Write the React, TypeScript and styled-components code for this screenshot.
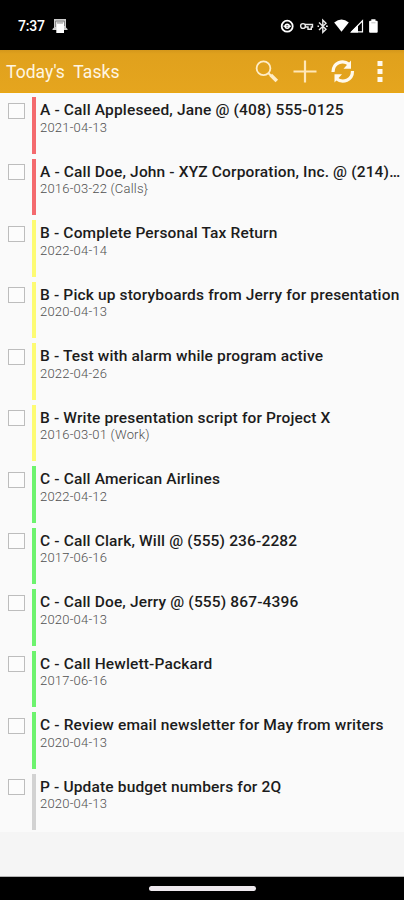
import React from "react";
import styled, { createGlobalStyle } from "styled-components";

const GlobalStyle = createGlobalStyle`
  * { box-sizing: border-box; }
  body { margin: 0; background: #f5f5f5; font-family: Roboto, "Liberation Sans", sans-serif; }
`;

const Screen = styled.div`
  width: 404px;
  height: 900px;
  display: flex;
  flex-direction: column;
  overflow: hidden;
  background: #f5f5f5;
`;

const StatusBar = styled.header`
  flex: none;
  height: 50px;
  padding: 1px 25px 0 18px;
  display: flex;
  align-items: center;
  justify-content: space-between;
  background: #000;
  color: #fff;
`;

const StatusLeft = styled.div`
  display: flex;
  align-items: center;
  gap: 7px;
`;

const Clock = styled.span`
  width: 27px;
  font-size: 14px;
  font-weight: 500;
  line-height: 16px;
  letter-spacing: -0.2px;
  white-space: nowrap;
`;

const Toolbar = styled.div`
  flex: none;
  height: 43px;
  padding: 0 6px 0 6px;
  display: flex;
  align-items: center;
  justify-content: space-between;
  background: linear-gradient(#d4971b 0, #e0a11d 4px, #e5a51e 100%);
  border-bottom: 1px solid #e9a711;
`;

const Heading = styled.h1`
  margin: 2px 0 0;
  color: #fff6e2;
  font-size: 17.5px;
  font-weight: 400;
  line-height: 20px;
  letter-spacing: 0.04px;
  white-space: pre;
`;

const ToolbarActions = styled.div`
  display: flex;
  align-items: center;
`;

const ActionButton = styled.button<{ $width: number }>`
  width: ${(p) => p.$width}px;
  height: 42px;
  padding: 1px 0 0;
  border: 0;
  background: none;
  display: flex;
  align-items: center;
  justify-content: center;
`;

const TaskList = styled.ul`
  flex: none;
  list-style: none;
  margin: 0;
  height: 739px;
  padding: 4px 0 0;
  background: #fafafa;
`;

const TaskRow = styled.li`
  height: 61.5px;
  padding: 0 0 5px 8px;
  display: flex;
`;

const CheckBox = styled.span`
  flex: none;
  width: 17px;
  height: 16px;
  margin: 5.5px 7px 0 0;
  border: 1px solid #bdbdbd;
  background: #fcfcfc;
`;

const PriorityBar = styled.span<{ $color: string }>`
  flex: none;
  width: 3.5px;
  margin-right: 4.5px;
  background: ${(p) => p.$color};
`;

const TaskText = styled.div`
  min-width: 0;
  padding-top: 4px;
`;

const Title = styled.div`
  color: #1c1c1c;
  font-size: 15.5px;
  font-weight: 500;
  line-height: 18px;
  letter-spacing: 0.15px;
  white-space: nowrap;
`;

const Due = styled.div`
  margin-top: 0.5px;
  color: #505050;
  font-size: 13px;
  font-weight: 300;
  line-height: 15px;
  letter-spacing: 0.2px;
  white-space: nowrap;
`;

const NavBar = styled.footer`
  flex: none;
  margin-top: auto;
  height: 23px;
  padding-top: 9px;
  background: #000;
  box-shadow: 0 -1px 0 #b4b4b4;
`;

const HomeHandle = styled.div`
  width: 107px;
  height: 5px;
  margin: 0 auto 0 149px;
  border-radius: 3px;
  background: #eee9ee;
`;

const RED = "#f46a6e";
const YELLOW = "#fdfb73";
const GREEN = "#6df36e";
const GRAY = "#d2d2d2";

const tasks = [
  { title: "A - Call Appleseed, Jane @ (408) 555-0125", due: "2021-04-13", color: RED },
  { title: "A - Call Doe, John - XYZ Corporation, Inc. @ (214)…", due: "2016-03-22 (Calls}", color: RED },
  { title: "B - Complete Personal Tax Return", due: "2022-04-14", color: YELLOW },
  { title: "B - Pick up storyboards from Jerry for presentation", due: "2020-04-13", color: YELLOW },
  { title: "B - Test with alarm while program active", due: "2022-04-26", color: YELLOW },
  { title: "B - Write presentation script for Project X", due: "2016-03-01 (Work)", color: YELLOW },
  { title: "C - Call American Airlines", due: "2022-04-12", color: GREEN },
  { title: "C - Call Clark, Will @ (555) 236-2282", due: "2017-06-16", color: GREEN },
  { title: "C - Call Doe, Jerry @ (555) 867-4396", due: "2020-04-13", color: GREEN },
  { title: "C - Call Hewlett-Packard", due: "2017-06-16", color: GREEN },
  { title: "C - Review email newsletter for May from writers", due: "2020-04-13", color: GREEN },
  { title: "P - Update budget numbers for 2Q", due: "2020-04-13", color: GRAY },
];

const PrinterIcon = () => (
  <svg width="16" height="16" viewBox="0 0 16 16">
    <path d="M2 1h12v8.500l1.500 1.500v1H12V15H4.500v-3H.5v-1L2 9.500z" fill="#ccc" />
    <path d="M4.500 4.500h7.500V15H4.500z" fill="#fff" />
    <path d="M3.500 9V3h9v5M5 5h6" fill="none" stroke="#777" strokeWidth=".8" />
  </svg>
);

const StatusIcons = () => (
  <svg width="99" height="16" viewBox="280 17 99 16">
    <circle cx="287.200" cy="25.200" r="5.500" fill="none" stroke="#fff" strokeWidth="1.800" />
    <circle cx="287.200" cy="25.200" r="2" fill="none" stroke="#fff" strokeWidth="1.500" />
    <path d="M283.500 25.200h7.500" stroke="#fff" strokeWidth="1.200" />
    <g fill="none" stroke="#e8e8e8" strokeWidth="1.400">
      <circle cx="303" cy="25" r="2.400" />
      <path d="M305 23.500h7.500V26h-1.200v2.300H308V26h-3" />
      <path d="m319 21.500 7 6.800-3.200 3V19.200l3.200 3-7 6.800M317.500 25.200h1.500M326 25.200h1.800" strokeWidth="1.400" />
    </g>
    <path d="M334.200 21.500q7.300-6 14.600 0l-7.300 9.300z" fill="#fff" />
    <path d="M362.500 19.800v11h-11z" fill="none" stroke="#fff" strokeWidth="1.200" />
    <path d="M350.500 31.400 358 24v7.400z" fill="#fff" />
    <path d="M371.300 18.200h4.200v1.500h1.200q1 0 1 1v10q0 1-1 1h-6.600q-1 0-1-1v-10q0-1 1-1h1.200z" fill="#fff" />
    <path d="M371.300 21.800h4.200" stroke="#aaa" strokeWidth=".7" />
  </svg>
);

const SearchIcon = () => (
  <svg width="24" height="24" viewBox="0 0 24 24" fill="none" stroke="#ffedc7">
    <circle cx="8.500" cy="8.200" r="6.900" strokeWidth="1.800" />
    <path d="m13.300 13 3 3" strokeWidth="2" />
    <path d="m15.800 15.100 6 6" strokeWidth="3.600" />
  </svg>
);

const PlusIcon = () => (
  <svg width="24" height="24" viewBox="0 0 24 24">
    <path d="M12 .5v22M.5 11.500h23" stroke="#ffe7b8" strokeWidth="2.200" />
  </svg>
);

const RefreshIcon = () => (
  <svg width="24" height="24" viewBox="0 0 24 24">
    <g fill="none" stroke="#fff9ec" strokeWidth="3.200">
      <path d="M2 12C2 3 11.500-1 18 4.200" />
      <path d="M21.500 11C21.500 20 12 24 5.500 18.800" />
    </g>
    <path d="M20 .5v8.300h-7.500zM3.500 22.500v-8.300H11z" fill="#fff9ec" />
  </svg>
);

const MoreIcon = () => (
  <svg width="6" height="24" viewBox="0 0 6 24">
    <path d="M.5 1h5v5h-5zM.5 9h5v5h-5zM.5 17h5v5h-5z" fill="#fff9ec" />
  </svg>
);

export default function App() {
  return (
    <>
      <GlobalStyle />
      <Screen>
        <StatusBar>
          <StatusLeft>
            <Clock>7:37</Clock>
            <PrinterIcon />
          </StatusLeft>
          <StatusIcons />
        </StatusBar>
        <Toolbar>
          <Heading>{"Today's  Tasks"}</Heading>
          <ToolbarActions>
            <ActionButton $width={38} aria-label="Search"><SearchIcon /></ActionButton>
            <ActionButton $width={38} aria-label="Add"><PlusIcon /></ActionButton>
            <ActionButton $width={38} aria-label="Refresh"><RefreshIcon /></ActionButton>
            <ActionButton $width={36} aria-label="More"><MoreIcon /></ActionButton>
          </ToolbarActions>
        </Toolbar>
        <TaskList>
          {tasks.map((t) => (
            <TaskRow key={t.title}>
              <CheckBox role="checkbox" aria-checked="false" />
              <PriorityBar $color={t.color} />
              <TaskText>
                <Title>{t.title}</Title>
                <Due>{t.due}</Due>
              </TaskText>
            </TaskRow>
          ))}
        </TaskList>
        <NavBar>
          <HomeHandle />
        </NavBar>
      </Screen>
    </>
  );
}
